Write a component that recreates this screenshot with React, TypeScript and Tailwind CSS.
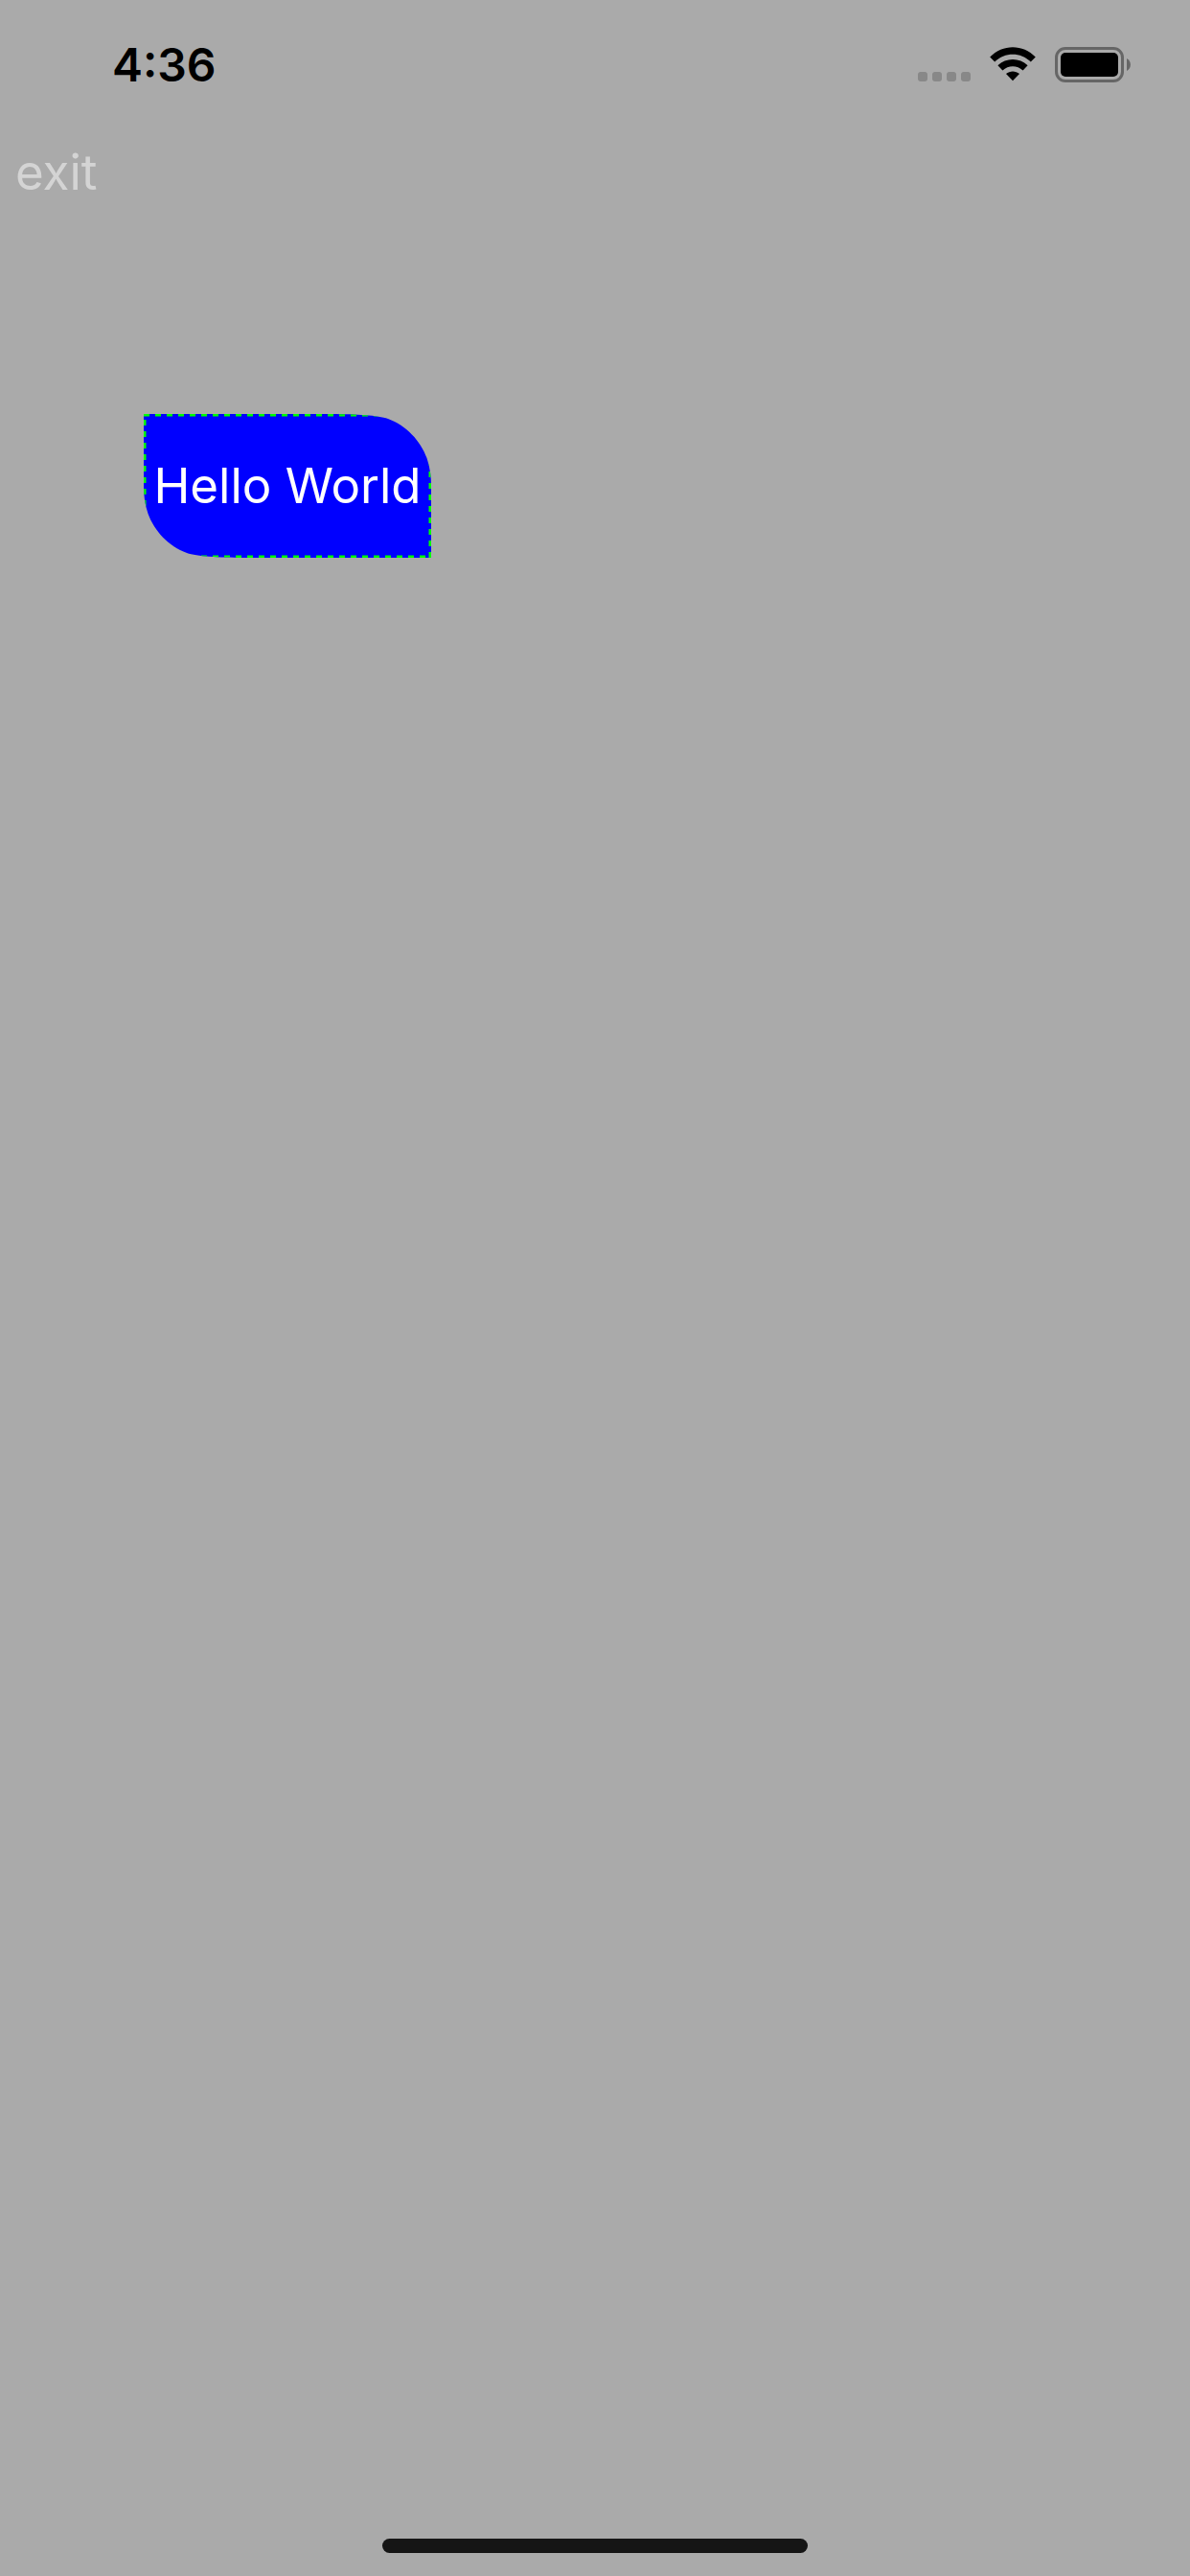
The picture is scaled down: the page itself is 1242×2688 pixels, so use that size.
export default function App() {
  return (
    <div className="flex min-h-screen flex-col bg-[#aaaaaa] font-[Inter,sans-serif]">
      <header className="flex h-[132px] items-start justify-between pt-10 pr-[62px] pl-[117px]">
        <time className="text-[48px] leading-[56px] font-semibold text-black">4:36</time>
        <div className="flex items-start pt-2">
          <svg className="mt-[27px] mr-[20px] h-[10px] w-[55px]" viewBox="0 0 55 10" fill="#888888" role="img" aria-label="No cellular signal">
            <rect width="10" height="10" rx="3" />
            <rect x="15" width="10" height="10" rx="3" />
            <rect x="30" width="10" height="10" rx="3" />
            <rect x="45" width="10" height="10" rx="3" />
          </svg>
          <svg className="mt-px mr-[20px] h-[36px] w-[48px]" viewBox="0 0 48 36" role="img" aria-label="Wi-Fi">
            <path d="M0.2 10.6C13.5 -3.2 34.5 -3.2 47.8 10.6L42.8 15.6C32.4 5.2 15.6 5.2 5.2 15.6Z" />
            <path d="M8.4 19.2C17 10.8 31 10.8 39.6 19.2L34.6 24.5C28.6 18.8 19.4 18.8 13.4 24.5Z" />
            <path d="M17 28C21 24.6 27 24.6 31 28L24 35.2Z" />
          </svg>
          <svg className="mt-px h-[37px] w-[79px]" viewBox="0 0 79 37" role="img" aria-label="Battery full">
            <rect x="1.5" y="1.5" width="69" height="34" rx="9.5" fill="none" stroke="#666666" strokeWidth="3" />
            <rect x="6" y="6" width="60" height="25" rx="5" />
            <path d="M75 12C80.200 14.500 80.200 22.500 75 25Z" fill="#666666" />
          </svg>
        </div>
      </header>
      <main className="flex flex-1 flex-col items-start">
        <button type="button" className="mt-4 ml-4 text-[51px] leading-[64px] text-[#d4d4d4]">exit</button>
        <button type="button" className="relative mt-[220px] ml-[150px] h-[150px] w-[300px] text-center text-[51px] leading-[64px] whitespace-nowrap text-white">
          <svg className="absolute inset-0 size-full" viewBox="0 0 300 150" aria-hidden="true">
            <clipPath id="leaf">
              <path d="M0 0H150C190 0 238 -1 255 5C274 12 289 28 295.500 46C299 56 300 66 300 75V150H150C110 150 62 151 45 145C26 138 11 122 4.500 104C1 94 0 84 0 75Z" />
            </clipPath>
            <g clipPath="url(#leaf)">
              <rect width="300" height="150" fill="#0000ff" />
              <rect width="300" height="150" fill="none" stroke="#00ff00" strokeWidth="5" strokeDasharray="6 6" />
            </g>
          </svg>
          <span className="relative">Hello World</span>
        </button>
      </main>
      <footer className="flex justify-center pb-6">
        <div className="h-[15px] w-[444px] rounded-full bg-[#151515]" />
      </footer>
    </div>
  );
}
